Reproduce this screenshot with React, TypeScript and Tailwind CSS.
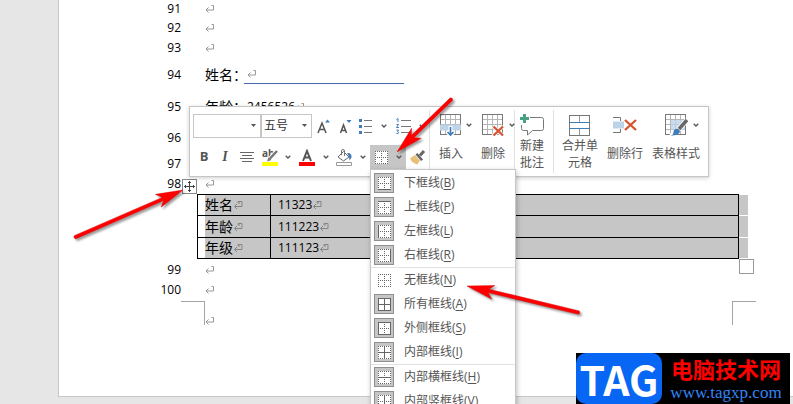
import type { ReactNode } from "react";

const cjk = "font-['Open_Sans','Noto_Sans_CJK_SC',sans-serif]";

const rows = [
  { name: "姓名", value: "11323", h: "h-5" },
  { name: "年龄", value: "111223", h: "h-[21px]" },
  { name: "年级", value: "111123", h: "h-5" },
];

const menu = [
  [
    { label: "下框线", k: "B", sides: "b" },
    { label: "上框线", k: "P", sides: "t" },
    { label: "左框线", k: "L", sides: "l" },
    { label: "右框线", k: "R", sides: "r" },
  ],
  [
    { label: "无框线", k: "N", sides: "" },
    { label: "所有框线", k: "A", sides: "tblrhv" },
    { label: "外侧框线", k: "S", sides: "tblr" },
    { label: "内部框线", k: "I", sides: "hv" },
  ],
  [
    { label: "内部横框线", k: "H", sides: "h" },
    { label: "内部竖框线", k: "V", sides: "v" },
  ],
];

function Mark() {
  return (
    <svg width="9" height="8" viewBox="0 0 9 8" fill="none" stroke="#999" className="shrink-0">
      <path d="M6.500.5H8.500v4.500H1M3.500 2.500 1 5l2.500 2.500" />
    </svg>
  );
}

function CellMark() {
  return (
    <svg width="10" height="10" viewBox="0 0 10 10" fill="none" stroke="#858585" className="shrink-0">
      <path d="M5 1.500h4v5H1.500M4 4 1.500 6.500 4 9M5 1.500v1.500h2" />
    </svg>
  );
}

function Caret() {
  return (
    <svg width="6" height="4" viewBox="0 0 6 4" fill="none" stroke="#555" strokeWidth="1.3" className="shrink-0">
      <path d="M.7.7 3 3 5.3.7" />
    </svg>
  );
}

function SolidCaret() {
  return (
    <svg width="5" height="3" viewBox="0 0 5 3" className="pointer-events-none absolute right-[5px] top-[10px]">
      <path d="M0 0h5L2.5 3z" fill="#555" />
    </svg>
  );
}

function BorderIcon({ sides }: { sides: string }) {
  const lines: Record<string, string> = {
    h: "M0 6.5h13",
    v: "M6.5 0v13",
    t: "M0 .5h13",
    b: "M0 12.5h13",
    l: "M.5 0v13",
    r: "M12.5 0v13",
  };
  return (
    <svg width="13" height="13" viewBox="0 0 13 13" fill="none" shapeRendering="crispEdges">
      <path d="M0 0h13v13H0z" fill="#fff" />
      {Object.keys(lines).map((s) => (
        <path key={s} d={lines[s]} stroke="#666" strokeDasharray={sides.includes(s) ? undefined : "1 1"} />
      ))}
    </svg>
  );
}

function Line({ n, h, children }: { n: string; h: string; children?: ReactNode }) {
  return (
    <div className={`flex items-center whitespace-nowrap ${h}`}>
      <span className="w-[122px] shrink-0 text-right text-xs">{n}</span>
      <div className="ml-6 flex items-center">{children || <Mark />}</div>
    </div>
  );
}

function Tool({ label, w, children }: { label: string; w: string; children: ReactNode }) {
  return (
    <button type="button" aria-label={label} className={`flex h-6 shrink-0 items-center justify-center ${w}`}>
      {children}
    </button>
  );
}

function BigTool({ w, icon, caret, children }: { w: string; icon: ReactNode; caret?: boolean; children: ReactNode }) {
  return (
    <button type="button" className={`flex shrink-0 flex-col items-start text-left ${w}`}>
      <span className="flex h-6 items-center gap-[5px]">
        {icon}
        {caret && <Caret />}
      </span>
      {children}
    </button>
  );
}

function Grid() {
  return (
    <g shapeRendering="crispEdges">
      <path d="M.5.5h20v20H.5z" fill="#fff" stroke="#777" />
      <path d="M5.5 1v19M10.5 1v19M15.5 1v19M1 5.5h19M1 10.5h19M1 15.5h19" stroke="#b5b5b5" />
    </g>
  );
}

function MiniToolbar() {
  return (
    <div
      role="toolbar"
      className={`absolute left-[189px] top-[106px] flex border border-[#c6c6c6] bg-white text-xs text-[#555] shadow-[0_1px_4px_rgba(0,0,0,0.2)] ${cjk}`}
    >
      <div className="flex w-[239px] flex-col gap-[7px] py-[7px] pl-[3px]">
        <div className="flex">
          <div className="relative">
            <input aria-label="字体" className="block h-6 w-[68px] border border-[#c6c6c6] px-1 outline-none" />
            <SolidCaret />
          </div>
          <div className="relative">
            <select aria-label="字号" className="block h-6 w-[51px] appearance-none border border-[#c6c6c6] px-[2px] text-[#333] outline-none">
              <option>五号</option>
            </select>
            <SolidCaret />
          </div>
          <Tool label="增大字号" w="w-[22px]">
            <svg width="13" height="15" viewBox="0 0 13 15">
              <path d="M1 14 5 4l4 10M2.5 10.5h5" fill="none" stroke="#555" strokeWidth="1.5" />
              <path d="M8 3.5 10.5.5l2.500 3z" fill="#3f7cb8" />
            </svg>
          </Tool>
          <Tool label="减小字号" w="w-[22px]">
            <svg width="13" height="15" viewBox="0 0 13 15">
              <path d="m1.500 14 3-8 3 8M2.500 11.500h4" fill="none" stroke="#555" strokeWidth="1.5" />
              <path d="M7.500 1h5L10 4z" fill="#3f7cb8" />
            </svg>
          </Tool>
          <Tool label="项目符号" w="w-5">
            <svg width="14" height="16" viewBox="0 0 14 16">
              <path d="M0 1h3v3H0zM0 7h3v3H0zM0 13h3v3H0z" fill="#3f7cb8" />
              <path d="M5 2.500h8M5 8.500h8M5 14.500h8" stroke="#777" />
            </svg>
          </Tool>
          <Tool label="项目符号库" w="w-4"><Caret /></Tool>
          <Tool label="编号" w="w-[22px]">
            <svg width="15" height="16" viewBox="0 0 15 16">
              <path d="M.5 1.500 2 .5V4M.5 6.500h2L.5 9.500h2.500M.5 12h2L1.500 13.500 2.500 14 2 15.500H.5" fill="none" stroke="#3f7cb8" />
              <path d="M5 2.500h10M5 8.500h10M5 14.500h10" stroke="#777" />
            </svg>
          </Tool>
          <Tool label="编号库" w="w-4"><Caret /></Tool>
        </div>
        <div className="flex">
          <Tool label="加粗" w="w-[22px]"><b className="text-[13px]">B</b></Tool>
          <Tool label="倾斜" w="w-5">
            <i className="font-['Liberation_Serif',serif] text-sm font-bold">I</i>
          </Tool>
          <Tool label="居中" w="w-6">
            <svg width="14" height="10" viewBox="0 0 14 10" stroke="#666" shapeRendering="crispEdges">
              <path d="M0 .5h14M2 3.500h10M0 6.500h14M2 9.500h10" />
            </svg>
          </Tool>
          <Tool label="突出显示" w="w-[22px]">
            <svg width="17" height="17" viewBox="0 0 17 17" className="overflow-visible">
              <text x="0" y="8" fontSize="10" fontWeight="700" fill="#555">ab</text>
              <path d="M14.500 2 7 10.500 5 12.500" stroke="#fff" strokeWidth="4" />
              <path d="m15 2-7.500 8" stroke="#777" strokeWidth="2.500" />
              <path d="m6.500 8.500 3 2.500L5 12.500z" fill="#777" />
              <path d="M0 13h16v4H0z" fill="#ff0" />
            </svg>
          </Tool>
          <Tool label="突出显示颜色" w="w-[14px]"><Caret /></Tool>
          <Tool label="字体颜色" w="w-6">
            <svg width="16" height="17" viewBox="0 0 16 17">
              <path d="M4 12 8 2l4 10M5.500 8.500h5" fill="none" stroke="#555" strokeWidth="2" />
              <path d="M0 13h16v4H0z" fill="red" />
            </svg>
          </Tool>
          <Tool label="更多字体颜色" w="w-[13px]"><Caret /></Tool>
          <Tool label="底纹" w="w-6">
            <svg width="17" height="17" viewBox="0 0 17 17">
              <path d="M7.500 2.500 13 8l-5.500 4L2 8z" fill="#fff" stroke="#666" />
              <path d="M5.500 6V2q0-1.500 1.500-1.500T8.500 2v5" fill="none" stroke="#777" />
              <path d="M11 4q5-.5 4.500 4.500l-2 3-.5-4z" fill="#3f7cb8" />
              <path d="M.5 13.500h15v3H.5z" fill="#fff" stroke="#999" />
            </svg>
          </Tool>
          <Tool label="底纹颜色" w="w-[13px]"><Caret /></Tool>
          <div className="ml-px flex bg-[#c6c6c6]">
            <Tool label="边框" w="w-[22px]"><BorderIcon sides="" /></Tool>
            <Tool label="边框列表" w="w-[14px]"><Caret /></Tool>
          </div>
          <Tool label="格式刷" w="w-6">
            <svg width="16" height="15" viewBox="0 0 16 15">
              <path d="M0 8.500 5 5l5 6-3 3.500Q2 13 0 8.500z" fill="#e8c07a" />
              <path d="m5.500 4.500 2-1.500 5.500 6.500-2 1.500z" fill="#666" />
              <path d="M10 5.500 14 1" stroke="#666" strokeWidth="3" />
            </svg>
          </Tool>
        </div>
      </div>

      <div className="my-[3px] flex border-x border-[#e1e1e1] pl-[9px] pt-[3px] leading-[25px]">
        <BigTool
          w="w-[42px]"
          caret
          icon={
            <svg width="22" height="23" viewBox="-1 0 22 23">
              <Grid />
              <path d="M0 10.500h21v6H0z" fill="#bdd3e8" />
              <path d="M10.500 12v9M7 17.500l3.500 3.500 3.500-3.500" fill="none" stroke="#fff" strokeWidth="4" />
              <path d="M10.500 13v8M7.500 18l3 3 3-3" fill="none" stroke="#3f7cb8" strokeWidth="1.700" />
            </svg>
          }
        >
          <span className="pt-1">插入</span>
        </BigTool>
        <BigTool
          w="w-[33px]"
          caret
          icon={
            <svg width="23" height="23" viewBox="-1 0 23 23">
              <Grid />
              <path d="m11 12 10 10m0-10L11 22" stroke="#fff" strokeWidth="4" />
              <path d="m11.500 12.500 9.500 9m0-9-9.500 9" stroke="#d6532f" strokeWidth="2.300" />
            </svg>
          }
        >
          <span className="pt-1">删除</span>
        </BigTool>
      </div>
      <div className="my-[3px] border-r border-[#e1e1e1] px-[5px] pt-[3px] leading-[17px]">
        <BigTool
          w="w-7"
          icon={
            <svg width="24" height="23" viewBox="0 0 24 23" fill="none">
              <path d="M10 3.500h11.500q2 0 2 2v9q0 2-2 2h-9L7.500 21v-4.500h-4q-2 0-2-2V11" stroke="#777" />
              <path d="M4.500 0v9M0 4.500h9" stroke="#4aa083" strokeWidth="3" />
            </svg>
          }
        >
          <span>新建<br />批注</span>
        </BigTool>
      </div>
      <div className="flex pb-1 pl-2 pt-1.5">
        <BigTool
          w="w-[45px] leading-[17px]"
          icon={
            <svg width="28" height="21" viewBox="-7 0 28 21" shapeRendering="crispEdges" fill="none">
              <path d="M.5.5h20v20H.5z" stroke="#777" />
              <path d="M10.500 1v6M10.500 14v6" stroke="#999" />
              <path d="M0 7.500h21M0 13.500h21" stroke="#3f7cb8" />
            </svg>
          }
        >
          <span>合并单</span>
          <span className="pl-1.5">元格</span>
        </BigTool>
        <BigTool
          w="w-[45px] leading-[25px]"
          icon={
            <svg width="30" height="18" viewBox="-6 0 30 18" fill="none">
              <path d="M0 1.500h7.500V5M0 16.500h7.500V13" stroke="#777" />
              <path d="M0 5.500h11v7H0z" fill="#bdd3e8" />
              <path d="m12 4 11 10M23 4 12 14" stroke="#d6532f" strokeWidth="2.300" />
            </svg>
          }
        >
          <span className="pt-1">删除行</span>
        </BigTool>
        <BigTool
          w="w-14 leading-[25px]"
          caret
          icon={
            <svg width="36" height="23" viewBox="-13 0 36 23">
              <Grid />
              <path d="M6 6h14v10H6z" fill="#bdd3e8" fillOpacity=".8" />
              <path d="m22 6-9 10-7 6" stroke="#fff" strokeWidth="5" />
              <path d="m22 6-8 9" stroke="#666" strokeWidth="3.500" />
              <path d="M12 14.500q4 1 2.500 4.500-3 3-9 2.500 3-.5 3-3.500t3.500-3.500z" fill="#3f7cb8" />
            </svg>
          }
        >
          <span className="pt-1">表格样式</span>
        </BigTool>
      </div>
    </div>
  );
}

function BorderMenu() {
  return (
    <div
      role="menu"
      className={`absolute left-[370px] top-[169px] w-[146px] border border-[#c6c6c6] bg-white pt-px text-xs text-[#555] shadow-[1px_2px_5px_rgba(0,0,0,0.25)] ${cjk}`}
    >
      {menu.map((group, i) => (
        <div key={i} className={i ? "border-t border-[#e1e1e1]" : ""}>
          {group.map((m) => (
            <button key={m.k} type="button" role="menuitem" className="flex h-6 w-full items-center gap-[10px] pl-[3px] text-left">
              <span
                className={`flex size-5 items-center justify-center border ${
                  m.sides ? "border-[#8f8f8f] bg-[#c6c6c6]" : "border-transparent"
                }`}
              >
                <BorderIcon sides={m.sides} />
              </span>
              <span>
                {m.label}(<u className="underline-offset-2">{m.k}</u>)
              </span>
            </button>
          ))}
        </div>
      ))}
    </div>
  );
}

function Arrows() {
  // tip position and heading of each pointer; the shape itself points left
  const arrows = [
    { x: 397, y: 152, a: -44, len: 76 },
    { x: 183, y: 190, a: 156.5, len: 118 },
    { x: 467, y: 286, a: 13.5, len: 115 },
  ];
  return (
    <svg className="pointer-events-none absolute left-0 top-0 drop-shadow-[2px_2px_1px_rgba(0,0,0,0.4)]" width="793" height="404" aria-hidden="true">
      {arrows.map((r) => (
        <path
          key={r.x}
          transform={`translate(${r.x} ${r.y}) rotate(${r.a})`}
          d={`M0 0 27-7 22-2H${r.len}l1 2-1 1.500H22l5 5.500z`}
          fill="red"
          stroke="#d40000"
          strokeWidth=".4"
        />
      ))}
    </svg>
  );
}

export default function App() {
  return (
    <div className={`relative h-screen overflow-hidden bg-[#e6e6e6] text-black ${cjk}`}>
      <main className="ml-[58px] border-b border-l border-[#c6c6c6] bg-white pb-[71px] text-sm">
        <Line n="91" h="h-[17px]" />
        <Line n="92" h="h-[21px]" />
        <Line n="93" h="h-5" />
        <Line n="94" h="h-[33px]">
          <span className="w-[39px]">姓名：</span>
          <span className="flex h-[18px] w-40 items-center border-b border-[#4a66ac] pl-[3px]"><Mark /></span>
        </Line>
        <Line n="95" h="h-[31px]">
          <span className="w-[42px]">年龄：</span>
          <span className="text-xs">2456526</span>
          <Mark />
        </Line>
        <Line n="96" h="h-[31px]" />
        <Line n="97" h="h-[21px]" />
        <Line n="98" h="h-5" />

        <div className="relative ml-[138px] mr-[45px] flex">
          <button type="button" aria-label="移动表格" className="absolute -left-[15px] -top-[15px] flex size-[15px] items-center justify-center border border-[#888] bg-white">
            <svg width="11" height="11" viewBox="0 0 11 11" fill="none" stroke="#444">
              <path d="M5.500 0v11M0 5.500h11M4 2 5.500.5 7 2M4 9l1.500 1.500L7 9M2 4 .5 5.500 2 7M9 4l1.500 1.500L9 7" />
            </svg>
          </button>
          <table className="flex-1 border-collapse">
            <tbody>
              {rows.map((r) => (
                <tr key={r.name}>
                  <td className="w-[73px] border border-black p-0 pl-[7px]">
                    <div className={`flex items-center bg-[#c6c6c6] ${r.h}`}>{r.name}<CellMark /></div>
                  </td>
                  <td className="border border-black p-0">
                    <div className={`flex items-center bg-[#c6c6c6] pl-[7px] text-xs ${r.h}`}>{r.value}<CellMark /></div>
                  </td>
                </tr>
              ))}
            </tbody>
          </table>
          <div className="flex w-[9px] flex-col gap-px pt-px">
            {rows.map((r) => (
              <div key={r.name} className={`bg-[#c6c6c6] ${r.h}`} />
            ))}
          </div>
          <span className="absolute -bottom-[15px] -right-[6px] size-[15px] border border-[#999] bg-white" />
        </div>

        <Line n="99" h="h-[21px]" />
        <Line n="100" h="h-5" />
        <div className="ml-[122px] mr-[37px] mt-px flex justify-between">
          <div className="flex items-end">
            <span className="size-6 border-r border-t border-[#a5a5a5]" />
            <Mark />
          </div>
          <span className="size-6 border-l border-t border-[#a5a5a5]" />
        </div>
      </main>

      <MiniToolbar />
      <BorderMenu />
      <Arrows />

      <a href="#" className="absolute bottom-0 right-[3px] flex h-[51px] w-[214px] bg-black">
        <span className="flex w-[86px] items-center justify-center rounded-[10px] bg-[#0866f5] font-['Noto_Sans_CJK_SC',sans-serif] text-[41px] font-bold leading-none text-white">
          TAG
        </span>
        <span className="flex flex-1 flex-col items-center whitespace-nowrap">
          <span className="font-['Noto_Sans_CJK_SC',sans-serif] text-[22px] font-bold leading-[30px] text-[#f00]">电脑技术网</span>
          <span className="font-['Liberation_Serif',serif] text-[17px] leading-5 text-[#3484f5]">www.tagxp.com</span>
        </span>
      </a>
    </div>
  );
}
